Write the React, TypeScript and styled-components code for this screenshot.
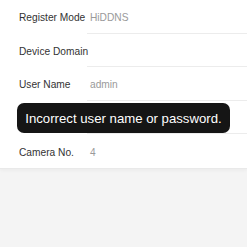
import React from 'react';
import styled, {createGlobalStyle} from 'styled-components';

const GlobalStyle = createGlobalStyle`
  html, body {
    margin: 0;
    padding: 0;
    background: #f4f4f4;
  }
  body {
    font-family: 'Liberation Sans', Arial, sans-serif;
    width: 247px;
    height: 247px;
    overflow: hidden;
  }
`

const Page = styled.div`
  position: relative;
  width: 247px;
  height: 247px;
  background: #f4f4f4;
`

const List = styled.div`
  background: #fff;
  border-bottom: 1px solid #e9e9e9;
  box-shadow: 0 2px 3px rgba(0, 0, 0, 0.03);
`

const Row = styled.div`
  display: flex;
  align-items: stretch;
  height: 33.6px;
`

const Label = styled.div`
  width: 68px;
  flex: none;
  padding: 2px 0 0 19px;
  display: flex;
  align-items: center;
  font-size: 10.2px;
  color: #333;
  white-space: nowrap;
`

const Field = styled.div<{$last?: boolean}>`
  flex: 1;
  display: flex;
  align-items: center;
  padding: 2px 0 0 3px;
  font-size: 10.2px;
  color: #9a9a9a;
  border-bottom: ${p => (p.$last ? 'none' : '1px solid #ececec')};
`

const Toast = styled.div`
  position: absolute;
  left: 17px;
  top: 103px;
  width: 213px;
  height: 30px;
  border-radius: 7px;
  background: #151515;
  color: #fff;
  font-size: 13.2px;
  display: flex;
  align-items: center;
  justify-content: center;
  white-space: nowrap;
`

const rows = [
  {label: 'Register Mode', value: 'HiDDNS'},
  {label: 'Device Domain', value: ''},
  {label: 'User Name', value: 'admin'},
  {label: 'Password', value: ''},
  {label: 'Camera No.', value: '4'},
];

export default function App() {
  return (
    <Page>
      <GlobalStyle />
      <List>
        {rows.map((r, i) => (
          <Row key={r.label}>
            <Label>{r.label}</Label>
            <Field $last={i === rows.length - 1}>{r.value}</Field>
          </Row>
        ))}
      </List>
      <Toast>Incorrect user name or password.</Toast>
    </Page>
  );
}
